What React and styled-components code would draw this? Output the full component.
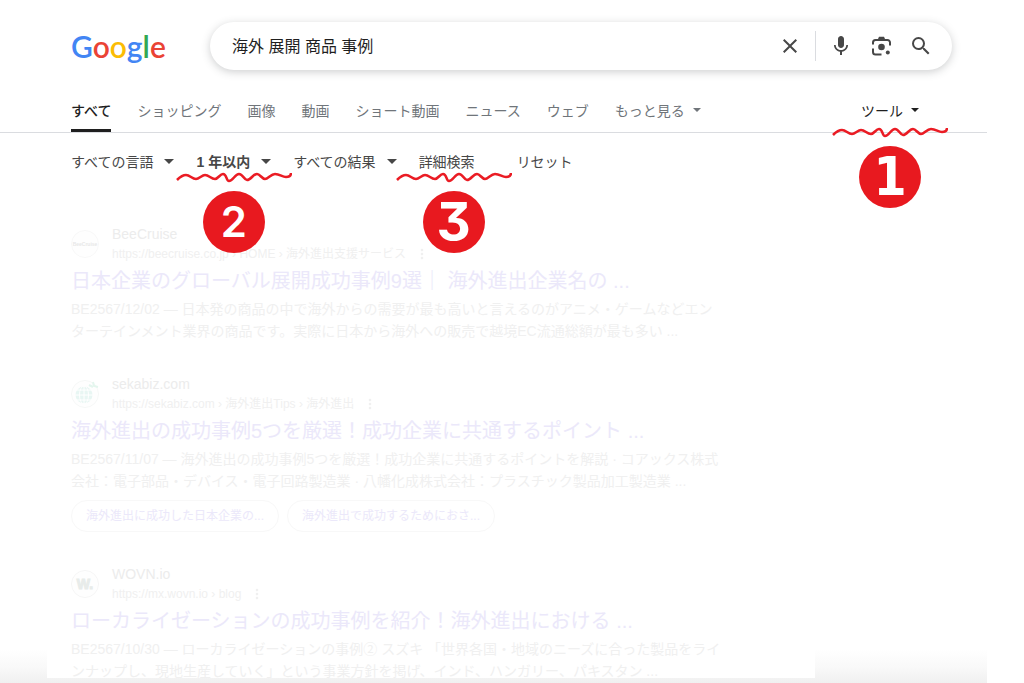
import React, { useState } from "react";
import styled, { createGlobalStyle, css } from "styled-components";
import { MdClose, MdMic, MdSearch, MdMoreVert } from "react-icons/md";

const GlobalStyle = createGlobalStyle`
  * {
    box-sizing: border-box;
  }
  body {
    margin: 0;
    background: #fff;
    font-family: "Liberation Sans", "Noto Sans CJK JP", sans-serif;
  }
  button {
    border: none;
    padding: 0;
    background: none;
    font: inherit;
    color: inherit;
    cursor: pointer;
  }
  a {
    color: inherit;
    text-decoration: none;
  }
`;

const StyledPage = styled.div`
  min-height: 100vh;
  margin-right: 37px;
  padding-top: 22px;
  background: linear-gradient(to top, #f0f0f0, #f9f9f9 16px, #fff 34px);
`;

const StyledHeader = styled.header`
  display: flex;
  align-items: center;
  gap: 46px;
  padding: 0 35px 0 71px;
`;

const StyledLogo = styled.a`
  flex: none;
  width: 93px;
  font-family: Lato, sans-serif;
  font-size: 30px;
  font-weight: 600;
  line-height: 48px;
`;

const LogoLetter = styled.span`
  color: ${({ $color }) => $color};
`;

const StyledSearch = styled.form`
  flex: 1;
  display: flex;
  align-items: center;
  gap: 16px;
  height: 48px;
  padding: 0 19px 0 22px;
  border-radius: 24px;
  background: #fff;
  color: #474747;
  box-shadow: 0 2px 8px rgba(60, 64, 67, 0.25);
  input {
    flex: 1;
    min-width: 0;
    border: none;
    outline: none;
    padding: 0 0 2px;
    background: none;
    font: inherit;
    font-size: 16px;
    color: #1f1f1f;
  }
`;

const IconButton = styled.button`
  display: flex;
  svg {
    width: 24px;
    height: 24px;
  }
`;

const Divider = styled.span`
  width: 1px;
  height: 30px;
  margin: 0 -3px 0 -3px;
  background: #dadce0;
`;

const StyledNav = styled.nav`
  display: flex;
  gap: 26px;
  margin-top: 20px;
  padding: 0 68px 0 71px;
  border-bottom: 1px solid #dadce0;
  font-size: 14px;
  color: #70757a;
`;

const tabStyle = css`
  display: flex;
  align-items: center;
  gap: 8px;
  height: 42px;
  padding-bottom: 2px;
  white-space: nowrap;
`;

const Tab = styled.a`
  ${tabStyle}
  ${({ $active }) =>
    $active &&
    css`
      color: #1f1f1f;
      font-weight: 500;
      box-shadow: inset 0 -3px #1f1f1f;
    `}
`;

const Tools = styled.button`
  ${tabStyle}
  position: relative;
  margin-left: auto;
  color: #1f1f1f;
`;

const Caret = styled.span`
  border: solid transparent;
  border-width: ${({ $size }) => $size}px ${({ $size }) => $size}px 0;
  border-top-color: currentColor;
`;

const StyledFilters = styled.div`
  display: flex;
  gap: 22px;
  margin-top: 11px;
  padding: 0 71px;
  font-size: 14px;
  color: #474747;
`;

const Filter = styled.button`
  position: relative;
  display: flex;
  align-items: center;
  gap: 11px;
  height: 36px;
  padding: 0 ${({ $end }) => $end || 0}px 2px ${({ $start }) => $start || 0}px;
  font-weight: ${({ $bold }) => ($bold ? 700 : 400)};
  white-space: nowrap;
`;

// numbered red marker hanging below a control
const StyledMark = styled.span`
  position: absolute;
  z-index: 1;
  top: ${({ $top }) => $top}px;
  left: 50%;
  transform: translateX(-50%);
  display: flex;
  flex-direction: column;
  align-items: center;
  gap: 7px;
  svg {
    display: block;
  }
`;

const digitFonts = {
  1: css`
    font: 700 53px/62px "DejaVu Sans Condensed", "DejaVu Sans", sans-serif;
  `,
  2: css`
    font: 600 42px/62px Inter, sans-serif;
  `,
  3: css`
    font: 700 53px/62px Inter, sans-serif;
    font-feature-settings: "cv09";
  `,
};

const Badge = styled.b`
  width: 62px;
  height: 62px;
  border-radius: 50%;
  background: #e8191f;
  color: #fff;
  text-align: center;
  ${({ $num }) => digitFonts[$num]}
`;

const Mark = ({ num, top }) => (
  <StyledMark $top={top}>
    <svg width="116" height="12" viewBox="0 0 116 12" fill="none">
      <path
        d="M1 8C4 5 7 3 10 3C14 3 16 7 20 7C23 7 26 3 29 3C33 3 35 7 39 7C42 7 44 2 47 2C51 2 50 9 53 9C57 9 59 2 63 2C67 2 68 8 71 8C75 8 77 2 81 2C84 2 86 7 89 7C92 7 95 2 99 2C104 2 106 5 110 5C113 5 115 4 115 1"
        stroke="#ea1c24"
        strokeWidth="2.6"
      />
    </svg>
    <Badge $num={num}>{num}</Badge>
  </StyledMark>
);

const StyledResults = styled.main`
  display: flex;
  flex-direction: column;
  gap: 32px;
  max-width: 768px;
  margin: 34px 0 0 47px;
  padding: 10px 24px 1px;
  background: linear-gradient(to top, transparent 5px, #fff 5px);
`;

const StyledResult = styled.article`
  color: #f0f0f0;
  .source {
    display: flex;
    align-items: center;
    gap: 13px;
    height: 40px;
  }
  .avatar {
    flex: none;
    width: 28px;
    height: 28px;
  }
  .name {
    font-size: 14px;
    line-height: 20px;
    color: #ececec;
  }
  .url {
    display: flex;
    align-items: center;
    gap: 8px;
    font-size: 12px;
    line-height: 20px;
  }
  .url svg {
    width: 16px;
    height: 16px;
  }
  h3 {
    margin: 0;
    font-size: 20px;
    font-weight: 400;
    line-height: 34px;
    color: #ebe8fa;
    white-space: nowrap;
  }
  p {
    margin: 0;
    font-size: 14px;
    line-height: 22px;
    white-space: nowrap;
  }
`;

const Chips = styled.div`
  display: flex;
  gap: 8px;
  margin-top: 8px;
  a {
    height: 32px;
    padding: 0 14px;
    border: 1px solid #f8f8f8;
    border-radius: 16px;
    font-size: 12px;
    line-height: 30px;
    color: #ebe8fa;
  }
`;

const LensIcon = () => (
  <svg viewBox="0 0 24 24" fill="none" stroke="currentColor" strokeWidth="2">
    <path d="M4 10.500V8.500a2.500 2.500 0 0 1 2.500-2.500H18.500a2.500 2.500 0 0 1 2.500 2.500V11.500" />
    <path d="M4 14.500V18a2.500 2.500 0 0 0 2.500 2.500H12.500" />
    <path d="M9 5l1-2.300h5L16 5z" fill="currentColor" stroke="none" />
    <circle cx="12.500" cy="13" r="3.300" fill="currentColor" stroke="none" />
    <circle cx="18.800" cy="18.500" r="2" fill="currentColor" stroke="none" />
  </svg>
);

const avatars = {
  bee: (
    <svg className="avatar" viewBox="0 0 28 28">
      <circle cx="14" cy="14" r="13.500" fill="#fefefe" stroke="#f8f8f8" />
      <text x="14" y="16" fontSize="5" fontWeight="700" textAnchor="middle" fill="#e8e8e8">
        BeeCruise
      </text>
    </svg>
  ),
  globe: (
    <svg className="avatar" viewBox="0 0 28 28" fill="none" stroke="#fff">
      <circle cx="14" cy="14" r="13.500" fill="#fefefe" stroke="#f6f8f7" />
      <circle cx="13" cy="15" r="8.500" fill="#e8f6f3" stroke="none" />
      <path d="M4 15h18M6 10h14M6 20h14M13 6v18" />
      <ellipse cx="13" cy="15" rx="4.500" ry="9" />
      <path d="M18 5l4 2M22 2l1 4 4 1" stroke="#e4f6ee" strokeWidth="2" />
    </svg>
  ),
  wovn: (
    <svg className="avatar" viewBox="0 0 28 28">
      <circle cx="14" cy="14" r="13.500" fill="#fefefe" stroke="#f6f6f6" />
      <text x="14" y="19" fontSize="14" fontWeight="700" textAnchor="middle" fill="#e8ecea" stroke="#e8ecea">
        W.
      </text>
    </svg>
  ),
};

const logo = [
  ["G", "#4285f4"],
  ["o", "#ea4335"],
  ["o", "#fbbc05"],
  ["g", "#4285f4"],
  ["l", "#34a853"],
  ["e", "#ea4335"],
];

const tabs = ["すべて", "ショッピング", "画像", "動画", "ショート動画", "ニュース", "ウェブ"];

const results = [
  {
    avatar: "bee",
    name: "BeeCruise",
    url: "https://beecruise.co.jp › HOME › 海外進出支援サービス",
    title: "日本企業のグローバル展開成功事例9選｜ 海外進出企業名の ...",
    lines: [
      "BE2567/12/02 — 日本発の商品の中で海外からの需要が最も高いと言えるのがアニメ・ゲームなどエン",
      "ターテインメント業界の商品です。実際に日本から海外への販売で越境EC流通総額が最も多い ...",
    ],
  },
  {
    avatar: "globe",
    name: "sekabiz.com",
    url: "https://sekabiz.com › 海外進出Tips › 海外進出",
    title: "海外進出の成功事例5つを厳選！成功企業に共通するポイント ...",
    lines: [
      "BE2567/11/07 — 海外進出の成功事例5つを厳選！成功企業に共通するポイントを解説 · コアックス株式",
      "会社：電子部品・デバイス・電子回路製造業 · 八幡化成株式会社：プラスチック製品加工製造業 ...",
    ],
    chips: ["海外進出に成功した日本企業の...", "海外進出で成功するためにおさ..."],
  },
  {
    avatar: "wovn",
    name: "WOVN.io",
    url: "https://mx.wovn.io › blog",
    title: "ローカライゼーションの成功事例を紹介！海外進出における ...",
    lines: [
      "BE2567/10/30 — ローカライゼーションの事例② スズキ 「世界各国・地域のニーズに合った製品をライ",
      "ンナップし、現地生産していく」という事業方針を掲げ、インド、ハンガリー、パキスタン ...",
    ],
  },
];

const Result = ({ avatar, name, url, title, lines, chips }) => (
  <StyledResult>
    <div className="source">
      {avatars[avatar]}
      <div>
        <div className="name">{name}</div>
        <div className="url">
          {url}
          <IconButton type="button" aria-label="詳細">
            <MdMoreVert />
          </IconButton>
        </div>
      </div>
    </div>
    <h3>
      <a href="#result">{title}</a>
    </h3>
    <p>
      {lines[0]}
      <br />
      {lines[1]}
    </p>
    {chips && (
      <Chips>
        {chips.map((chip) => (
          <a href="#chip" key={chip}>
            {chip}
          </a>
        ))}
      </Chips>
    )}
  </StyledResult>
);

export default function App() {
  const [query, setQuery] = useState("海外 展開 商品 事例");

  return (
    <StyledPage>
      <GlobalStyle />
      <StyledHeader>
        <StyledLogo href="#home" aria-label="Google">
          {logo.map(([letter, color], idx) => (
            <LogoLetter key={idx} $color={color}>
              {letter}
            </LogoLetter>
          ))}
        </StyledLogo>
        <StyledSearch role="search" onSubmit={(e) => e.preventDefault()}>
          <input
            type="text"
            aria-label="検索"
            value={query}
            onChange={(e) => setQuery(e.target.value)}
          />
          <IconButton type="button" aria-label="クリア" onClick={() => setQuery("")}>
            <MdClose />
          </IconButton>
          <Divider />
          <IconButton type="button" aria-label="音声検索">
            <MdMic />
          </IconButton>
          <IconButton type="button" aria-label="画像で検索">
            <LensIcon />
          </IconButton>
          <IconButton type="submit" aria-label="検索">
            <MdSearch />
          </IconButton>
        </StyledSearch>
      </StyledHeader>
      <StyledNav>
        {tabs.map((tab, idx) => (
          <Tab href="#tab" key={tab} $active={idx === 0}>
            {tab}
          </Tab>
        ))}
        <Tab href="#more">
          もっと見る
          <Caret $size={4} />
        </Tab>
        <Tools type="button">
          ツール
          <Caret $size={4} />
          <Mark num={1} top={37} />
        </Tools>
      </StyledNav>
      <StyledFilters>
        <Filter type="button">
          すべての言語
          <Caret $size={5} />
        </Filter>
        <Filter type="button" $bold>
          1 年以内
          <Caret $size={5} />
          <Mark num={2} top={28} />
        </Filter>
        <Filter type="button">
          すべての結果
          <Caret $size={5} />
        </Filter>
        <Filter type="button" $end={14}>
          詳細検索
          <Mark num={3} top={28} />
        </Filter>
        <Filter type="button" $start={6}>
          リセット
        </Filter>
      </StyledFilters>
      <StyledResults>
        {results.map((result) => (
          <Result key={result.name} {...result} />
        ))}
      </StyledResults>
    </StyledPage>
  );
}
